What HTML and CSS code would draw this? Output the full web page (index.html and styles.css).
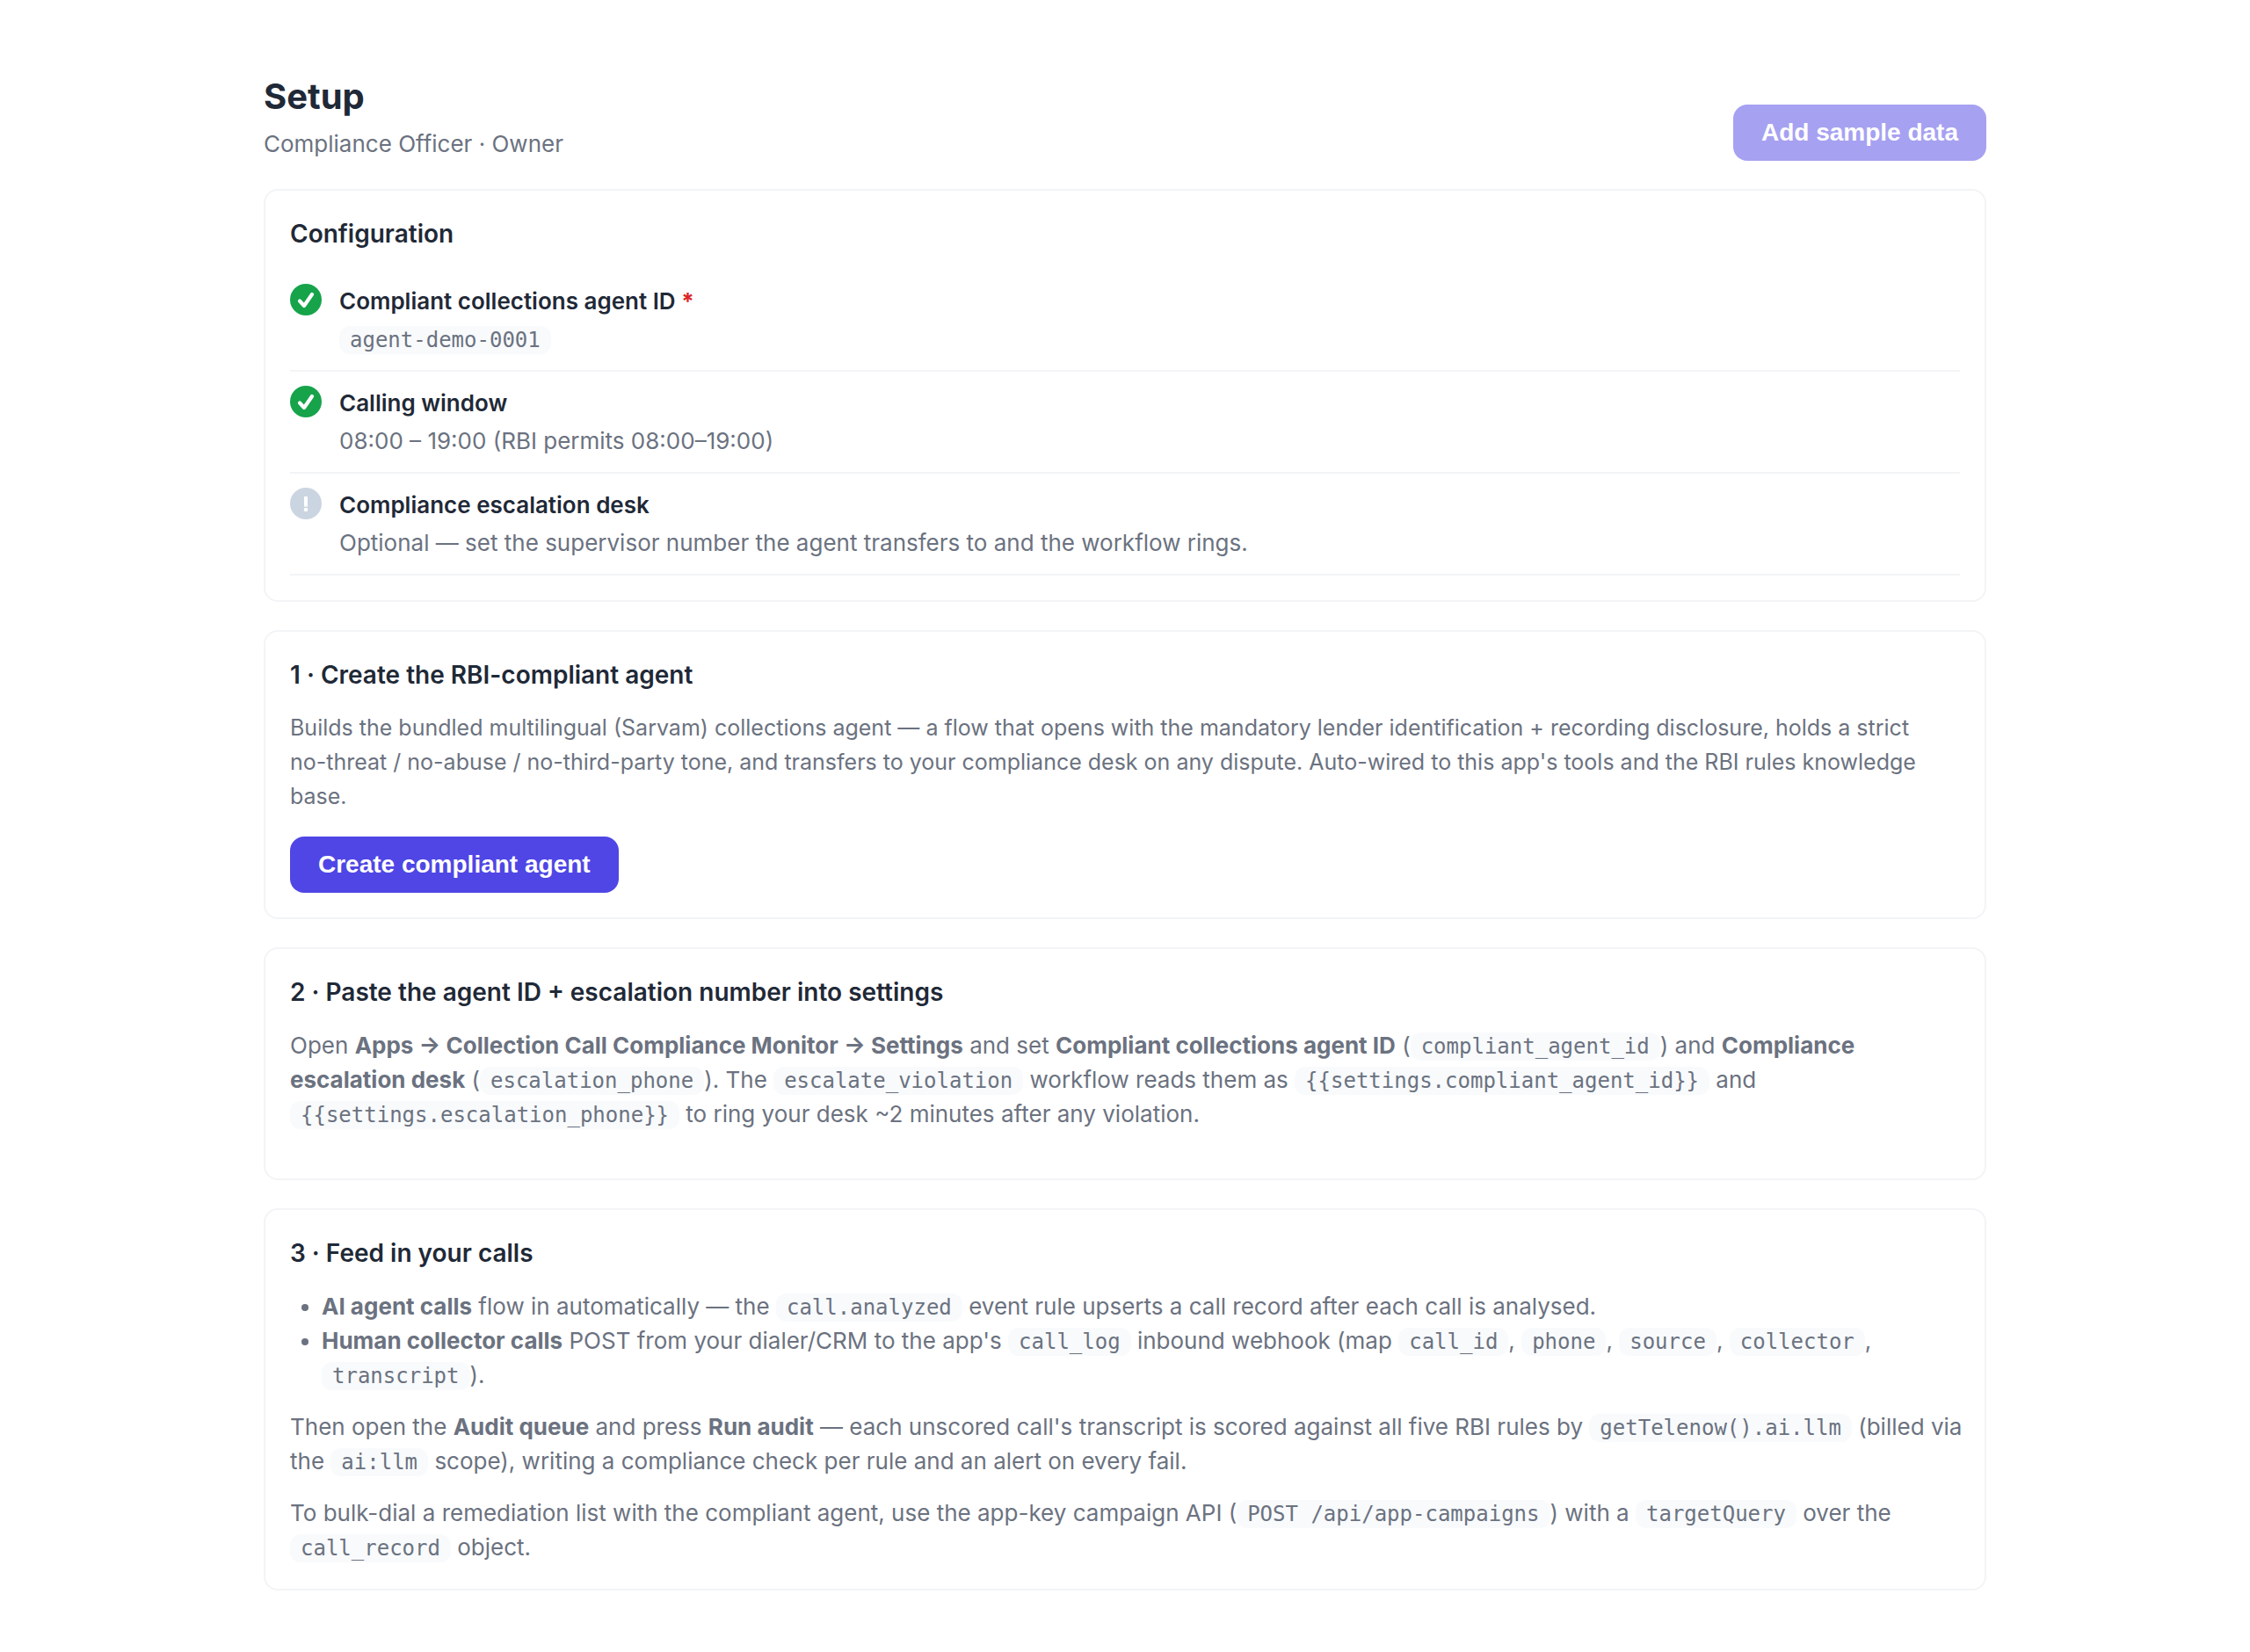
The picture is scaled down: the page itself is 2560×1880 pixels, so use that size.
FILE: index.html
```html
<!DOCTYPE html>
<html lang="en">
<head>
<meta charset="utf-8">
<meta name="viewport" content="width=device-width, initial-scale=1">
<title>Setup</title>
<link rel="stylesheet" href="styles.css">
</head>
<body>
<main class="page">
  <header class="page-header">
    <div class="heading">
      <h1 class="title">Setup</h1>
      <p class="subtitle">Compliance Officer · Owner</p>
    </div>
    <button class="button" type="button" disabled>Add sample data</button>
  </header>

  <section class="card">
    <h2 class="card-title">Configuration</h2>
    <ul class="checks">
      <li class="check">
        <svg class="check-icon" viewBox="0 0 36 36" aria-hidden="true"><circle cx="18" cy="18" r="18" fill="#16a34a"/><path d="M11 19.500 16 25 25 12" fill="none" stroke="#fff" stroke-width="4.200" stroke-linecap="round" stroke-linejoin="round"/></svg>
        <div class="check-body">
          <h3 class="check-title">Compliant collections agent ID <span class="required">*</span></h3>
          <p class="text"><code>agent-demo-0001</code></p>
        </div>
      </li>
      <li class="check">
        <svg class="check-icon" viewBox="0 0 36 36" aria-hidden="true"><circle cx="18" cy="18" r="18" fill="#16a34a"/><path d="M11 19.500 16 25 25 12" fill="none" stroke="#fff" stroke-width="4.200" stroke-linecap="round" stroke-linejoin="round"/></svg>
        <div class="check-body">
          <h3 class="check-title">Calling window</h3>
          <p class="text">08:00 – 19:00 (RBI permits 08:00–19:00)</p>
        </div>
      </li>
      <li class="check">
        <svg class="check-icon" viewBox="0 0 36 36" aria-hidden="true"><circle cx="18" cy="18" r="18" fill="#cbd5e1"/><path d="M16 10h4v11.500h-4z" fill="#fff"/><circle cx="18" cy="25" r="2.300" fill="#fff"/></svg>
        <div class="check-body">
          <h3 class="check-title">Compliance escalation desk</h3>
          <p class="text">Optional — set the supervisor number the agent transfers to and the workflow rings.</p>
        </div>
      </li>
    </ul>
  </section>

  <section class="card">
    <h2 class="card-title">1 · Create the RBI-compliant agent</h2>
    <p class="text lead compact">Builds the bundled multilingual (Sarvam) collections agent — a flow that opens with the mandatory lender identification + recording disclosure, holds a strict <span class="keep">no-threat</span> / no-abuse / no-third-party tone, and transfers to your compliance desk on any dispute. Auto-wired to this app's tools and the RBI rules knowledge base.</p>
    <button class="button" type="button">Create compliant agent</button>
  </section>

  <section class="card">
    <h2 class="card-title">2 · Paste the agent ID + escalation number into settings</h2>
    <p class="text lead">Open <strong>Apps → Collection Call Compliance Monitor → Settings</strong> and set <strong>Compliant collections agent ID</strong> (<code>compliant_agent_id</code>) and <strong>Compliance escalation desk</strong> (<code>escalation_phone</code>). The <code>escalate_violation</code> workflow reads them as <code>{{settings.compliant_agent_id}}</code> and <code>{{settings.escalation_phone}}</code> to ring your desk ~2 minutes after any violation.</p>
  </section>

  <section class="card">
    <h2 class="card-title">3 · Feed in your calls</h2>
    <div class="stack">
      <ul class="text bullets">
        <li><strong>AI agent calls</strong> flow in automatically — the <code>call.analyzed</code> event rule upserts a call record after each call is analysed.</li>
        <li><strong>Human collector calls</strong> POST from your dialer/CRM to the app's <code>call_log</code> inbound webhook (map <code>call_id</code>, <code>phone</code>, <code>source</code>, <code>collector</code>, <code>transcript</code>).</li>
      </ul>
      <p class="text wide">Then open the <strong>Audit queue</strong> and press <strong>Run audit</strong> — each unscored call's transcript is scored against all five RBI rules by <code>getTelenow().ai.llm</code> (billed via the <code>ai:llm</code> scope), writing a compliance check per rule and an alert on every fail.</p>
      <p class="text">To bulk-dial a remediation list with the compliant agent, use the app-key campaign API (<code>POST /api/app-campaigns</code>) with a <code>targetQuery</code> over the <code>call_record</code> object.</p>
    </div>
  </section>
</main>
</body>
</html>
```
FILE: styles.css
```css
* {
  box-sizing: border-box;
  margin: 0;
  padding: 0;
}

body {
  background: #fff;
  color: #1f2937;
  font-family: Inter, "Liberation Sans", sans-serif;
  font-size: 26px;
  line-height: 39px;
}

.page {
  display: flex;
  flex-direction: column;
  gap: 32px;
  max-width: 2040px;
  margin: 0 auto;
  padding: 80px 40px 70px;
}

.page-header {
  display: flex;
  align-items: flex-end;
  justify-content: space-between;
  gap: 32px;
}

.heading {
  display: flex;
  flex-direction: column;
  gap: 4px;
}

.title {
  font-size: 40px;
  line-height: 60px;
  font-weight: 700;
}

.subtitle,
.text {
  color: #6b7280;
}

.card {
  border: 2px solid #f3f4f6;
  border-radius: 16px;
  padding: 28px;
}

.card-title {
  margin-bottom: 20px;
  font-size: 28px;
  line-height: 42px;
  font-weight: 600;
}

.checks {
  list-style: none;
}

.check {
  display: flex;
  gap: 20px;
  padding: 16px 0;
  border-bottom: 2px solid #f3f4f6;
}

.check-icon {
  flex: none;
  width: 36px;
  height: 36px;
}

.check-body {
  display: flex;
  flex-direction: column;
  gap: 4px;
}

.check-title {
  font-size: 26px;
  font-weight: 600;
}

.required {
  color: #dc2626;
  font-weight: 700;
}

.lead {
  margin-bottom: 26px;
}

.compact {
  font-size: 25px;
}

.keep {
  white-space: nowrap;
}

/* Long copy may run a little into the card's right padding. */
.wide {
  margin-right: -4px;
}

.stack {
  display: flex;
  flex-direction: column;
  gap: 20px;
}

.bullets {
  padding-left: 36px;
}

strong {
  font-weight: 700;
}

code {
  padding: 2px 12px;
  border-radius: 12px;
  background: #f8fafc;
  font-family: "DejaVu Sans Mono", monospace;
  font-size: 24px;
  line-height: 1;
}

.button {
  height: 64px;
  padding: 0 32px;
  border: 0;
  border-radius: 16px;
  background: #4f46e5;
  color: #fff;
  font-family: "Liberation Sans", Arial, sans-serif;
  font-size: 28px;
  font-weight: 700;
  cursor: pointer;
}

.button:disabled {
  opacity: 0.5;
  cursor: default;
}
```
